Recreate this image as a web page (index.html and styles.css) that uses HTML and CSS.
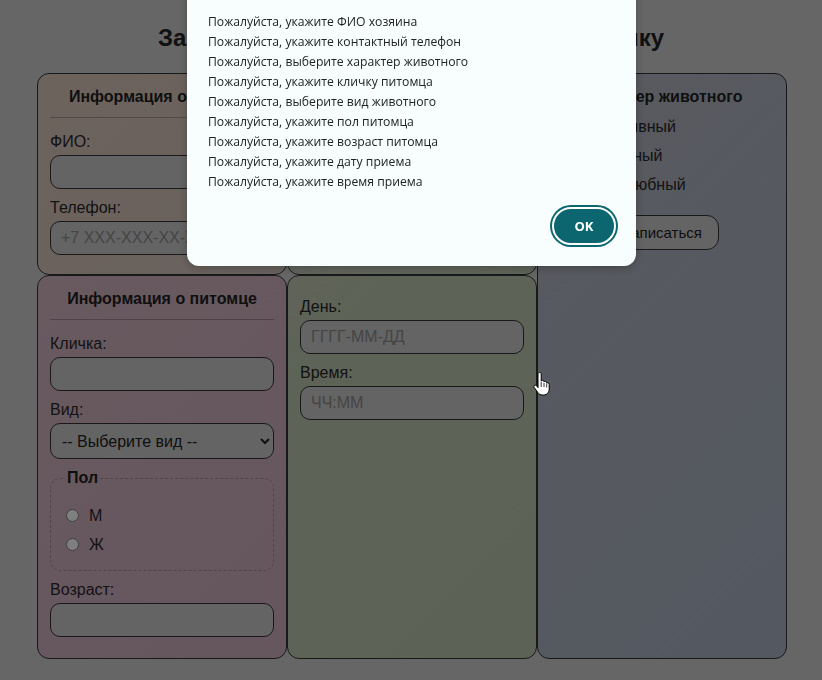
FILE: index.html
```html
<!DOCTYPE html>
<html lang="ru">
<head>
<meta charset="utf-8">
<title>Запись на прием</title>
<link rel="stylesheet" href="styles.css">
</head>
<body>
<h1 class="page-title">Запись на прием в ветеринарную клинику</h1>
<form class="board">
  <section class="card card-owner">
    <h3 class="card-head">Информация о хозяине</h3>
    <label class="lbl">ФИО:</label>
    <input class="field" type="text">
    <label class="lbl">Телефон:</label>
    <input class="field" type="text" placeholder="+7 XXX-XXX-XX-XX">
  </section>
  <section class="card card-visit">
    <h3 class="card-head">Информация о приеме</h3>
    <label class="lbl">Врач:</label>
    <input class="field" type="text">
  </section>
  <section class="card card-char">
    <h3 class="card-head plain">Характер животного</h3>
    <label class="opt"><input type="radio" name="ch" class="radio">Агрессивный</label>
    <label class="opt"><input type="radio" name="ch" class="radio">Спокойный</label>
    <label class="opt"><input type="radio" name="ch" class="radio">Дружелюбный</label>
    <div class="btn-row"><button type="button" class="submit">Записаться</button></div>
  </section>
  <section class="card card-pet">
    <h3 class="card-head">Информация о питомце</h3>
    <label class="lbl">Кличка:</label>
    <input class="field" type="text">
    <label class="lbl">Вид:</label>
    <select class="field sel"><option>-- Выберите вид --</option></select>
    <fieldset class="sex">
      <legend>Пол</legend>
      <label class="opt"><input type="radio" name="sx" class="radio">М</label>
      <label class="opt"><input type="radio" name="sx" class="radio">Ж</label>
    </fieldset>
    <label class="lbl">Возраст:</label>
    <input class="field" type="text">
  </section>
  <section class="card card-time">
    <label class="lbl first">День:</label>
    <input class="field" type="text" placeholder="ГГГГ-ММ-ДД">
    <label class="lbl">Время:</label>
    <input class="field" type="text" placeholder="ЧЧ:ММ">
  </section>
</form>

<div class="overlay"></div>
<div class="dialog">
  <h2 class="dlg-title">Обнаружены ошибки</h2>
  <div class="dlg-msgs">
    <p>Пожалуйста, укажите ФИО хозяина</p>
    <p>Пожалуйста, укажите контактный телефон</p>
    <p>Пожалуйста, выберите характер животного</p>
    <p>Пожалуйста, укажите кличку питомца</p>
    <p>Пожалуйста, выберите вид животного</p>
    <p>Пожалуйста, укажите пол питомца</p>
    <p>Пожалуйста, укажите возраст питомца</p>
    <p>Пожалуйста, укажите дату приема</p>
    <p>Пожалуйста, укажите время приема</p>
  </div>
  <div class="dlg-actions"><button type="button" class="ok">OK</button></div>
</div>

<svg class="cursor" width="17" height="24" viewBox="0 0 17 24">
  <path d="M5 2c0-.9.7-1.6 1.6-1.6S8.2 1.1 8.2 2v7.2c.2-.5.8-.9 1.4-.9.8 0 1.4.6 1.4 1.4v.4c.2-.5.8-.8 1.3-.8.8 0 1.4.6 1.4 1.4v.6c.3-.3.7-.5 1.1-.5.8 0 1.4.6 1.4 1.4V17c0 3.3-2.2 6-5.4 6H9.2c-1.9 0-3.2-.9-4.3-2.4L1.2 15.5c-.5-.8-.3-1.7.4-2.1.7-.4 1.5-.2 2 .4L5 15.6z" fill="#fff" stroke="#000" stroke-width="1"/>
  <path d="M8.2 10v5M11 11v4M13.7 12v3.5" stroke="#000" stroke-width=".8"/>
</svg>
</body>
</html>
```
FILE: styles.css
```css
html, body {
  margin: 0;
  padding: 0;
}
body {
  background: #cccccc;
  font-family: "Liberation Sans", Arial, sans-serif;
  color: #2a2a2a;
  height: 680px;
  overflow: hidden;
}
.page-title {
  margin: 24px 0 21px;
  font-size: 24px;
  line-height: 28px;
  text-align: center;
  color: #222;
}
.board {
  width: 750px;
  margin: 0 0 0 37px;
  display: grid;
  grid-template-columns: repeat(3, 250px);
  grid-template-rows: 202px 384px;
}
.card {
  box-sizing: border-box;
  border: 1px solid #333;
  border-radius: 12px;
  padding: 13px 12px 12px;
  display: flex;
  flex-direction: column;
}
.card-owner { background: linear-gradient(135deg, #dac6ba, #d2c4bc); }
.card-visit { background: linear-gradient(135deg, #c6ccbc, #bec8b4); }
.card-char  { grid-row: 1 / span 2; grid-column: 3; background: linear-gradient(135deg, #b2b4bf, #a8b2c2); }
.card-pet   { background: linear-gradient(135deg, #d2b4c0, #ccadbd); }
.card-time  { background: linear-gradient(135deg, #bec6b0, #b8c6ac); }

.card-head {
  margin: 0 0 15px;
  padding-bottom: 10px;
  border-bottom: 1px solid rgba(0,0,0,0.25);
  font-size: 16px;
  line-height: 20px;
  text-align: center;
  color: #1e1e1e;
}
.card-head.plain {
  border-bottom: none;
  padding-bottom: 0;
  margin-bottom: 5px;
}
.lbl {
  display: block;
  font-size: 16px;
  line-height: 18px;
  margin-bottom: 4px;
  color: #262626;
}
.lbl.first { margin-top: 9px; }
.field {
  box-sizing: border-box;
  width: 100%;
  height: 34px;
  margin: 0 0 10px;
  padding: 0 10px;
  border: 1px solid #333;
  border-radius: 10px;
  background: #c8c8c8;
  font-family: "Liberation Sans", Arial, sans-serif;
  font-size: 16px;
  color: #2a2a2a;
  flex: none;
}
.field::placeholder { color: #8a8a8a; }
.sel {
  height: 36px;
  padding: 0 7px;
  color: #222;
}
.opt {
  display: flex;
  align-items: center;
  height: 29px;
  font-size: 16px;
  color: #262626;
}
.card-char .opt { padding-left: 5px; }
.radio {
  width: 13px;
  height: 13px;
  margin: 0 10px 0 1px;
}
.sex {
  margin: 0 0 10px;
  padding: 14px 14px 11px;
  border: 1px dashed rgba(0,0,0,0.22);
  border-radius: 10px;
}
.sex legend {
  padding: 0 2px;
  font-size: 16px;
  line-height: 18px;
  font-weight: bold;
  color: #1e1e1e;
}
.btn-row {
  display: flex;
  justify-content: center;
  margin-top: 16px;
}
.submit {
  height: 35px;
  padding: 0 16px;
  border: 1px solid #333;
  border-radius: 12px;
  background: #c8c8c8;
  font-family: "Liberation Sans", Arial, sans-serif;
  font-size: 15px;
  color: #222;
}

.overlay {
  position: fixed;
  inset: 0;
  background: rgba(0,0,0,0.5);
}
.dialog {
  position: fixed;
  left: 187px;
  top: -33px;
  width: 449px;
  box-sizing: border-box;
  padding: 0 20px 21px 21px;
  background: #f8fefe;
  border-radius: 12px;
  box-shadow: 0 2px 8px rgba(0,0,0,0.25);
  font-family: "Open Sans", "Noto Sans", sans-serif;
  color: #222;
}
.dlg-title {
  margin: 0 0 21px;
  font-size: 20px;
  line-height: 24px;
  font-weight: 600;
}
.dlg-msgs p {
  margin: 0;
  font-size: 12.2px;
  line-height: 20px;
}
.dlg-actions {
  display: flex;
  justify-content: flex-end;
  margin-top: 15px;
}
.ok {
  width: 64px;
  height: 38px;
  border: 2px solid #ffffff;
  border-radius: 19px;
  background: #0b6670;
  box-shadow: 0 0 0 2px #0b6670;
  color: #fff;
  font-family: "Open Sans", "Noto Sans", sans-serif;
  font-weight: 700;
  font-size: 13px;
}
.cursor {
  position: fixed;
  left: 533px;
  top: 372px;
}
```
